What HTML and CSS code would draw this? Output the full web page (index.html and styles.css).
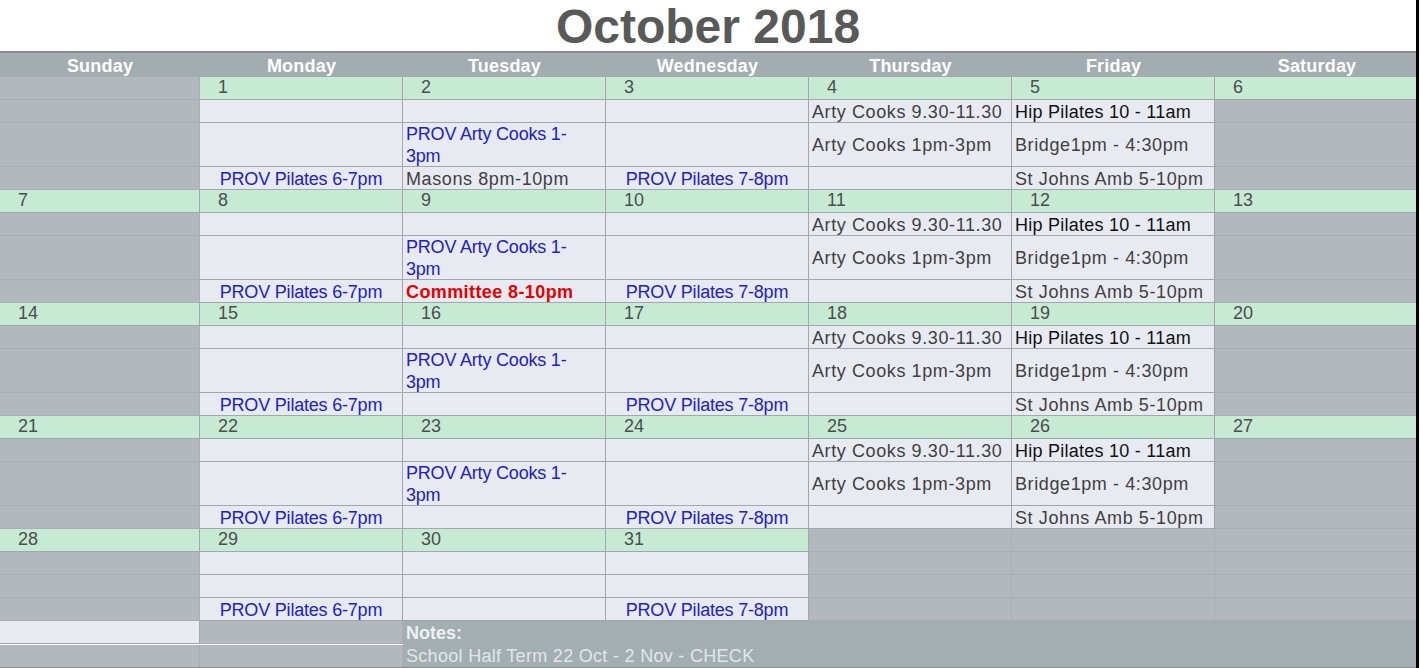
FILE: index.html
```html
<!DOCTYPE html>
<html>
<head>
<meta charset="utf-8">
<title>October 2018</title>
<link rel="stylesheet" href="styles.css">
</head>
<body>
<div class="sheet">
  <h1 class="title">October 2018</h1>
  <div class="cal">
    <div class="h">Sunday</div><div class="h">Monday</div><div class="h">Tuesday</div><div class="h">Wednesday</div><div class="h">Thursday</div><div class="h">Friday</div><div class="h">Saturday</div>

    <!-- week 1 -->
    <div class="c g"></div><div class="c d">1</div><div class="c d">2</div><div class="c d">3</div><div class="c d">4</div><div class="c d">5</div><div class="c d">6</div>
    <div class="c g"></div><div class="c l"></div><div class="c l"></div><div class="c l"></div><div class="c l dark">Arty Cooks 9.30-11.30</div><div class="c l black">Hip Pilates 10 - 11am</div><div class="c g"></div>
    <div class="c t g"></div><div class="c t l"></div><div class="c t l blue">PROV Arty Cooks 1-<br>3pm</div><div class="c t l"></div><div class="c t l dark">Arty Cooks 1pm-3pm</div><div class="c t l dark">Bridge1pm - 4:30pm</div><div class="c t g"></div>
    <div class="c g"></div><div class="c l blue ctr">PROV Pilates 6-7pm</div><div class="c l dark">Masons 8pm-10pm</div><div class="c l blue ctr">PROV Pilates 7-8pm</div><div class="c l"></div><div class="c l dark">St Johns Amb 5-10pm</div><div class="c g"></div>

    <!-- week 2 -->
    <div class="c d">7</div><div class="c d">8</div><div class="c d">9</div><div class="c d">10</div><div class="c d">11</div><div class="c d">12</div><div class="c d">13</div>
    <div class="c g"></div><div class="c l"></div><div class="c l"></div><div class="c l"></div><div class="c l dark">Arty Cooks 9.30-11.30</div><div class="c l black">Hip Pilates 10 - 11am</div><div class="c g"></div>
    <div class="c t g"></div><div class="c t l"></div><div class="c t l blue">PROV Arty Cooks 1-<br>3pm</div><div class="c t l"></div><div class="c t l dark">Arty Cooks 1pm-3pm</div><div class="c t l dark">Bridge1pm - 4:30pm</div><div class="c t g"></div>
    <div class="c g"></div><div class="c l blue ctr">PROV Pilates 6-7pm</div><div class="c l red">Committee 8-10pm</div><div class="c l blue ctr">PROV Pilates 7-8pm</div><div class="c l"></div><div class="c l dark">St Johns Amb 5-10pm</div><div class="c g"></div>

    <!-- week 3 -->
    <div class="c d">14</div><div class="c d">15</div><div class="c d">16</div><div class="c d">17</div><div class="c d">18</div><div class="c d">19</div><div class="c d">20</div>
    <div class="c g"></div><div class="c l"></div><div class="c l"></div><div class="c l"></div><div class="c l dark">Arty Cooks 9.30-11.30</div><div class="c l black">Hip Pilates 10 - 11am</div><div class="c g"></div>
    <div class="c t g"></div><div class="c t l"></div><div class="c t l blue">PROV Arty Cooks 1-<br>3pm</div><div class="c t l"></div><div class="c t l dark">Arty Cooks 1pm-3pm</div><div class="c t l dark">Bridge1pm - 4:30pm</div><div class="c t g"></div>
    <div class="c g"></div><div class="c l blue ctr">PROV Pilates 6-7pm</div><div class="c l"></div><div class="c l blue ctr">PROV Pilates 7-8pm</div><div class="c l"></div><div class="c l dark">St Johns Amb 5-10pm</div><div class="c g"></div>

    <!-- week 4 -->
    <div class="c d">21</div><div class="c d">22</div><div class="c d">23</div><div class="c d">24</div><div class="c d">25</div><div class="c d">26</div><div class="c d">27</div>
    <div class="c g"></div><div class="c l"></div><div class="c l"></div><div class="c l"></div><div class="c l dark">Arty Cooks 9.30-11.30</div><div class="c l black">Hip Pilates 10 - 11am</div><div class="c g"></div>
    <div class="c t g"></div><div class="c t l"></div><div class="c t l blue">PROV Arty Cooks 1-<br>3pm</div><div class="c t l"></div><div class="c t l dark">Arty Cooks 1pm-3pm</div><div class="c t l dark">Bridge1pm - 4:30pm</div><div class="c t g"></div>
    <div class="c g"></div><div class="c l blue ctr">PROV Pilates 6-7pm</div><div class="c l"></div><div class="c l blue ctr">PROV Pilates 7-8pm</div><div class="c l"></div><div class="c l dark">St Johns Amb 5-10pm</div><div class="c g"></div>

    <!-- week 5 -->
    <div class="c d">28</div><div class="c d">29</div><div class="c d">30</div><div class="c d">31</div><div class="c g"></div><div class="c g"></div><div class="c g"></div>
    <div class="c g"></div><div class="c l"></div><div class="c l"></div><div class="c l"></div><div class="c g"></div><div class="c g"></div><div class="c g"></div>
    <div class="c g"></div><div class="c l"></div><div class="c l"></div><div class="c l"></div><div class="c g"></div><div class="c g"></div><div class="c g"></div>
    <div class="c g"></div><div class="c l blue ctr">PROV Pilates 6-7pm</div><div class="c l"></div><div class="c l blue ctr">PROV Pilates 7-8pm</div><div class="c g"></div><div class="c g"></div><div class="c g"></div>

    <!-- notes -->
    <div class="c l n"></div><div class="c g n"></div>
    <div class="notes">
      <div class="notes-head">Notes:</div>
      <div class="notes-body">School Half Term 22 Oct - 2 Nov - CHECK</div>
    </div>
    <div class="c g n2"></div><div class="c g n2"></div>
  </div>
</div>
</body>
</html>
```

FILE: styles.css
```css
* { box-sizing: border-box; }
html, body { margin: 0; padding: 0; background: #ffffff; }
body { font-family: "Liberation Sans", Arial, sans-serif; }

.sheet {
  width: 1419px;
  height: 668px;
  border-right: 3px solid #000000;
  overflow: hidden;
}

.title {
  margin: 0;
  height: 51px;
  font-size: 48px;
  line-height: 53px;
  font-weight: bold;
  color: #595959;
  text-align: center;
}

.cal {
  display: grid;
  grid-template-columns: 200px 203px 203px 203px 203px 203px 204px;
  border-top: 2px solid #868d91;
  border-bottom: 2px solid #868d91;
  width: 1416px;
}

.h {
  height: 24px;
  background: #a3adb1;
  color: #ffffff;
  font-weight: bold;
  font-size: 18px;
  line-height: 20px;
  text-align: center;
  padding-top: 3px;
  letter-spacing: 0.2px;
}

.c {
  height: 23px;
  border-right: 1px solid #a2a7ae;
  border-bottom: 1px solid #a2a7ae;
  font-size: 18px;
  line-height: 20px;
  padding-left: 3px;
  display: flex;
  align-items: flex-end;
  white-space: nowrap;
}
.c.t { height: 44px; align-items: center; line-height: 22px; }

.d {
  background: #c6ead4;
  color: #4d4d4d;
  padding-left: 18px;
  padding-bottom: 2px;
}
.l { background: #e8eaf2; }
.g { background: #b3b7be; border-color: #a9adb4; }

.dark { color: #404040; letter-spacing: 0.6px; }
.black { color: #111111; letter-spacing: 0.25px; }
.blue { color: #2121c4; letter-spacing: -0.2px; }
.red { color: #e60000; font-weight: bold; letter-spacing: 0.4px; }
.ctr { justify-content: center; padding-left: 0; }

.n { height: 23px; }
.n2 { height: 22px; border-bottom: none; }

.notes {
  grid-column: 3 / span 5;
  grid-row: span 2;
  background: #a3aeb2;
  padding-left: 3px;
  font-size: 18px;
  line-height: 22px;
  padding-top: 1px;
}
.notes-head { color: #eef1f2; font-weight: bold; height: 23px; }
.notes-body { color: #e2e6e8; letter-spacing: 0.3px; }
```
